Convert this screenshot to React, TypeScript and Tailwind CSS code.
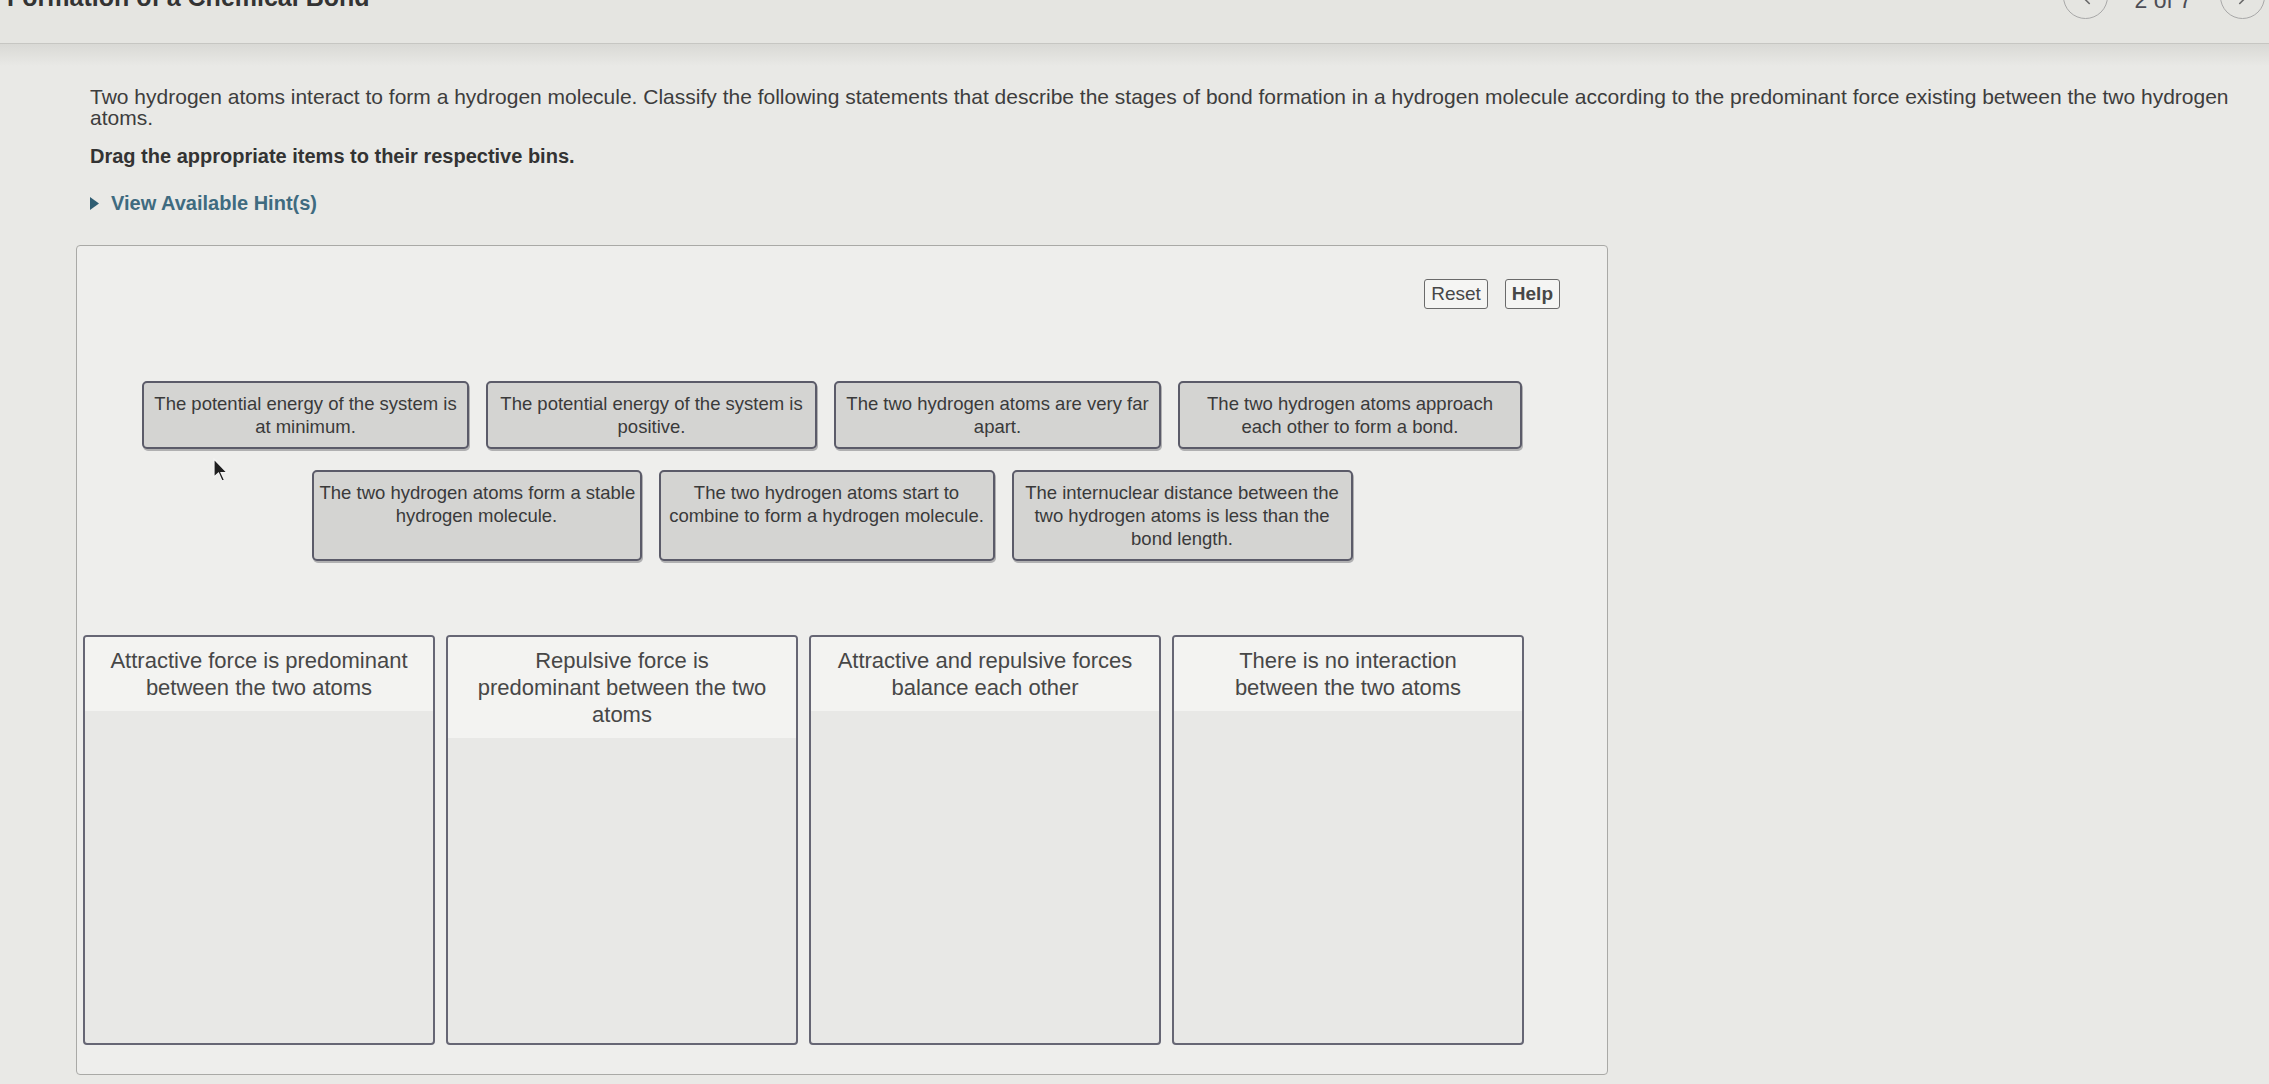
import { ChevronLeft, ChevronRight } from 'lucide-react';

type Item = { id: string; width: string; lines: string[] };
type Bin = { id: string; lines: string[] };

const items: Item[] = [
  { id: 'pe-min', width: 'w-[327px]', lines: ['The potential energy of the system is', 'at minimum.'] },
  { id: 'pe-pos', width: 'w-[331px]', lines: ['The potential energy of the system is', 'positive.'] },
  { id: 'far', width: 'w-[327px]', lines: ['The two hydrogen atoms are very far', 'apart.'] },
  { id: 'approach', width: 'w-[344px]', lines: ['The two hydrogen atoms approach', 'each other to form a bond.'] },
  { id: 'stable', width: 'w-[330px]', lines: ['The two hydrogen atoms form a stable', 'hydrogen molecule.'] },
  { id: 'start', width: 'w-[336px]', lines: ['The two hydrogen atoms start to', 'combine to form a hydrogen molecule.'] },
  {
    id: 'distance',
    width: 'w-[341px]',
    lines: ['The internuclear distance between the', 'two hydrogen atoms is less than the', 'bond length.'],
  },
];

const bins: Bin[] = [
  { id: 'attractive', lines: ['Attractive force is predominant', 'between the two atoms'] },
  { id: 'repulsive', lines: ['Repulsive force is', 'predominant between the two', 'atoms'] },
  { id: 'balance', lines: ['Attractive and repulsive forces', 'balance each other'] },
  { id: 'none', lines: ['There is no interaction', 'between the two atoms'] },
];

function DragItem({ item }: { item: Item }) {
  return (
    <div
      className={`${item.width} rounded-[5px] border-2 border-[#5b5b69] bg-[#d4d4d2] px-[6px] py-[9px] text-center text-[18.5px] leading-[23px] text-[#3a3a3a] shadow-[1px_2px_0_rgba(60,60,70,0.35)]`}
    >
      {item.lines.map((line) => (
        <div key={line} className="whitespace-nowrap">
          {line}
        </div>
      ))}
    </div>
  );
}

function DropBin({ bin }: { bin: Bin }) {
  return (
    <div className="flex h-[410px] w-[352px] flex-col overflow-hidden rounded-[4px] border-2 border-[#666674] bg-[#e8e8e6]">
      <div className="bg-[#f3f3f1] px-[8px] pt-[10px] pb-[10px] text-center text-[22px] leading-[27px] text-[#474747]">
        {bin.lines.map((line) => (
          <div key={line} className="whitespace-nowrap">
            {line}
          </div>
        ))}
      </div>
      <div className="flex-1" />
    </div>
  );
}

export default function App() {
  return (
    <div className="h-screen w-full overflow-hidden bg-[#e9e9e6] font-['Liberation_Sans',Arial,sans-serif] text-[#3b3b3b]">
      {/* Header */}
      <header className="flex h-[44px] items-start justify-between overflow-hidden border-b border-[#c6c6c2] bg-[#e5e5e1]">
        <h1 className="-mt-[15px] ml-[7px] text-[25px] leading-[25px] font-bold text-[#333333]">
          Formation of a Chemical Bond
        </h1>
        <div className="mr-[4px] flex items-start">
          <button className="-mt-[26px] flex h-[45px] w-[45px] items-center justify-center rounded-full border-[1.5px] border-[#a8a8a8] text-[#6a6a6a]">
            <ChevronLeft className="h-[26px] w-[26px]" strokeWidth={1.5} />
          </button>
          <span className="-mt-[11px] ml-[26px] text-[23px] leading-[23px] text-[#4d4d55]">2 of 7</span>
          <button className="-mt-[26px] ml-[28px] flex h-[45px] w-[45px] items-center justify-center rounded-full border-[1.5px] border-[#a8a8a8] text-[#6a6a6a]">
            <ChevronRight className="h-[26px] w-[26px]" strokeWidth={1.5} />
          </button>
        </div>
      </header>
      <div className="h-[22px] bg-gradient-to-b from-[#d9d9d5] to-[#e9e9e6]" />

      <main className="pr-[14px] pl-[90px]">
        <p className="pt-[20px] text-[21px] leading-[21px] text-[#3d3d3d]">
          Two hydrogen atoms interact to form a hydrogen molecule. Classify the following statements that describe
          the stages of bond formation in a hydrogen molecule according to the predominant force existing between the
          two hydrogen atoms.
        </p>
        <p className="mt-[17px] text-[20px] leading-[23px] font-bold text-[#333333]">
          Drag the appropriate items to their respective bins.
        </p>
        <button className="mt-[24px] flex items-center gap-[12px] text-[20px] leading-[23px] font-bold text-[#3f6b80]">
          <svg width="9" height="13" viewBox="0 0 9 13" className="fill-[#2f5d72]">
            <path d="M0 0 L9 6.5 L0 13 Z" />
          </svg>
          View Available Hint(s)
        </button>

        {/* Drag and drop panel */}
        <section className="relative mt-[30px] -ml-[14px] h-[830px] w-[1532px] rounded-[4px] border border-[#a9a9a6] bg-[#eeeeec] px-[6px] pt-[33px]">
          <div className="flex justify-end gap-[17px] pr-[41px]">
            <button className="h-[30px] rounded-[3px] border-[1.5px] border-[#6a6a6a] bg-[#f5f5f3] px-[6px] text-[19px] leading-[26px] text-[#474747]">
              Reset
            </button>
            <button className="h-[30px] rounded-[3px] border-[1.5px] border-[#6a6a6a] bg-[#f5f5f3] px-[6px] text-[19px] leading-[26px] font-bold text-[#474747]">
              Help
            </button>
          </div>

          <div className="mt-[72px] flex flex-wrap justify-center gap-x-[17px] gap-y-[21px] pr-[56px] pl-[36px]">
            {items.map((item) => (
              <DragItem key={item.id} item={item} />
            ))}
          </div>

          <div className="mt-[74px] flex gap-[11px]">
            {bins.map((bin) => (
              <DropBin key={bin.id} bin={bin} />
            ))}
          </div>

          {/* mouse pointer */}
          <svg width="16" height="26" viewBox="0 0 16 26" className="absolute top-[212px] left-[136px]">
            <path d="M1 1 L1 19 L5.5 15 L9 23 L11.5 22 L8 14.5 L14 14.5 Z" fill="#1f1f1f" stroke="#f4f4f4" strokeWidth="1.2" />
          </svg>
        </section>
      </main>
    </div>
  );
}
